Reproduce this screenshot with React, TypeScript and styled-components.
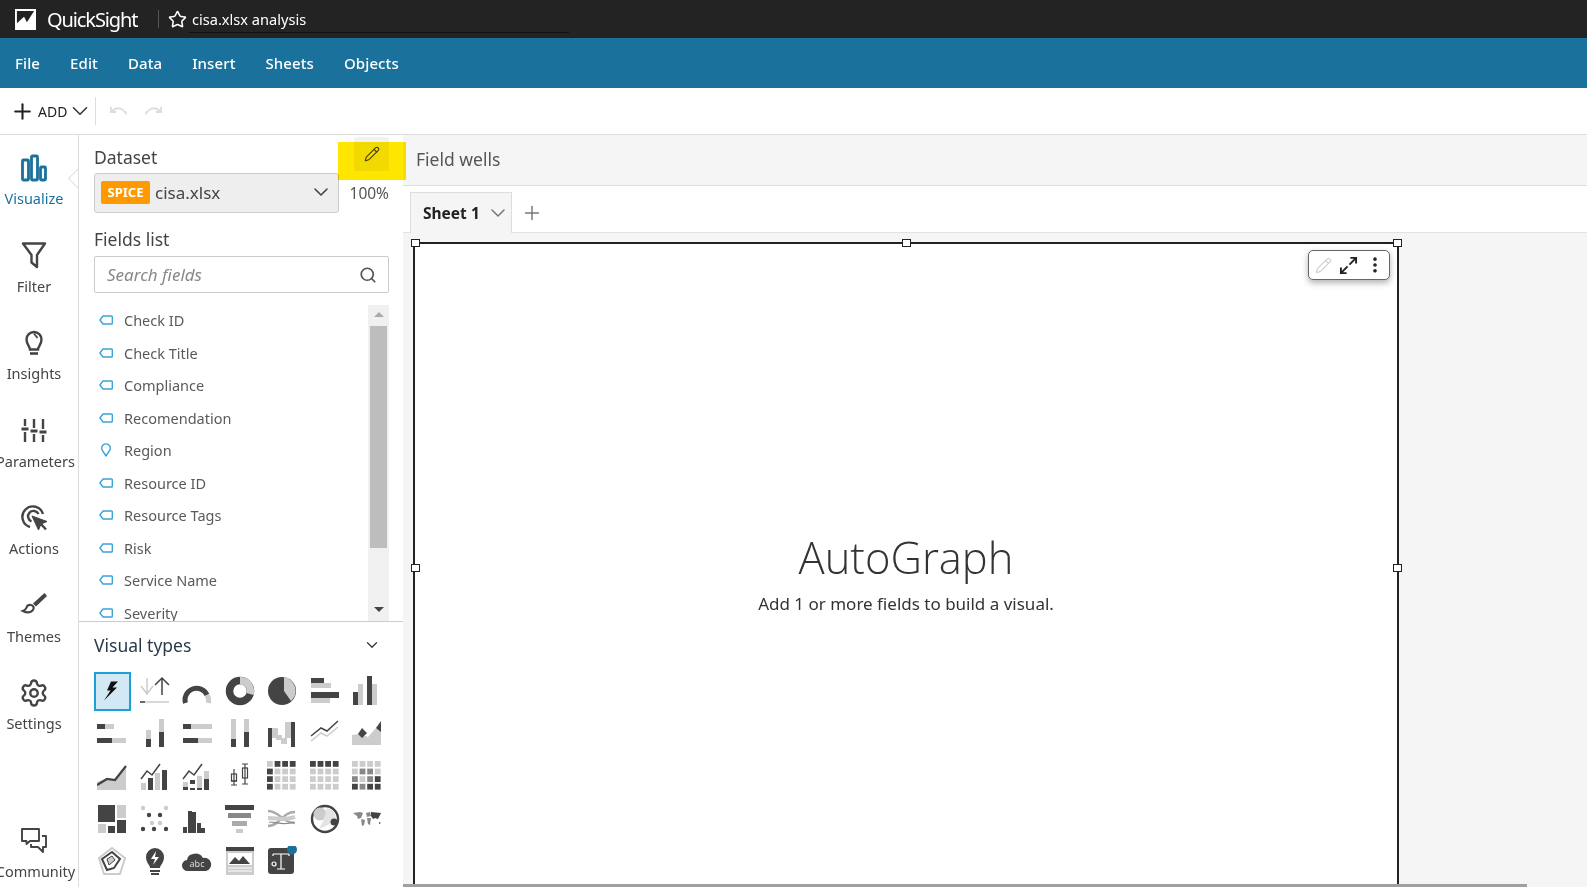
import React from 'react';
import styled, { createGlobalStyle } from 'styled-components';
import { Settings, Pencil, Search, ChevronDown, Plus, Star, MoreVertical } from 'lucide-react';

const DK = '#444';
const LT = '#ccc';

const railItems = [
    { label: 'Visualize', icon: 'visualize', active: true },
    { label: 'Filter', icon: 'filter' },
    { label: 'Insights', icon: 'insights' },
    { label: 'Parameters', icon: 'parameters', wide: true },
    { label: 'Actions', icon: 'actions' },
    { label: 'Themes', icon: 'themes' },
    { label: 'Settings', icon: 'settings' },
];

const fields = [
    'Check ID', 'Check Title', 'Compliance', 'Recomendation', 'Region',
    'Resource ID', 'Resource Tags', 'Risk', 'Service Name', 'Severity',
];

const RailIcon = ({ name, color }: { name: string; color: string }) => {
    const common = { width: 30, height: 30, viewBox: '0 0 30 30', fill: 'none', stroke: color, strokeWidth: 2.4 };
    switch (name) {
        case 'visualize':
            return (
                <svg {...common} strokeWidth={2.8}>
                    <rect x="3.500" y="7" width="6" height="20" rx="1" />
                    <rect x="12.500" y="3" width="6" height="24" rx="1" />
                    <rect x="21.500" y="14" width="5" height="13" rx="1" />
                </svg>
            );
        case 'filter':
            return (
                <svg {...common}>
                    <path d="M4 2.500h22L18 14v12l-5.500-4.500V14z" strokeLinejoin="round" />
                </svg>
            );
        case 'insights':
            return (
                <svg {...common}>
                    <path d="M11 21.500c0-3-3.500-5-3.500-10a7.500 7.500 0 0 1 15 0c0 5-3.500 7-3.500 10z" />
                    <path d="M15 5.500l3.500 4.500" strokeWidth="1.800" />
                    <path d="M11 25.500h8" strokeWidth="2.600" />
                </svg>
            );
        case 'parameters':
            return (
                <svg {...common}>
                    <path d="M6 3v7M6 16v10M15 3v9M15 18v8M24 3v10M24 19v7" />
                    <path d="M2.500 13h7M11.500 15h7M20.500 16h7" strokeWidth="2.800" />
                </svg>
            );
        case 'actions':
            return (
                <svg {...common}>
                    <path d="M11 24a10.500 10.500 0 1 1 13-13" />
                    <path d="M12.500 18.500A5.500 5.500 0 1 1 19.500 11" />
                    <path d="M13 13l15 5.500-6 2.500-2.500 6z" fill={color} strokeWidth="1" />
                    <path d="M22 21l5 5.500" />
                </svg>
            );
        case 'themes':
            return (
                <svg {...common}>
                    <path d="M25.500 2L14 12.500l3 3L28 5z" fill={color} stroke="none" />
                    <path d="M12 14c3 .5 3.500 3.500 1.500 5.500-2.500 2.500-6.500 2-9.500.5 2.500-.8 3-2 3.500-3.500.5-2 2.500-3 4.500-2.500z" strokeWidth="2.200" />
                </svg>
            );
        case 'settings':
            return <Settings size={30} color={color} strokeWidth={1.9} />;
        default:
            return (
                <svg {...common}>
                    <path d="M3 4h17v12H11l-3.500 3v-3H3z" strokeWidth="1.900" strokeLinejoin="round" />
                    <path d="M23 11h4v11h-3v5l-5-5h-7v-3" strokeWidth="1.900" strokeLinejoin="round" />
                </svg>
            );
    }
};

const TagIcon = () => (
    <svg width="14" height="10" viewBox="0 0 14 10" fill="none" stroke="#3aa3d8" strokeWidth="1.400">
        <path d="M4 1h8.500a.8.8 0 0 1 .8.800v6.400a.8.8 0 0 1-.8.800H4L.9 5z" strokeLinejoin="round" />
    </svg>
);

const PinIcon = () => (
    <svg width="14" height="14" viewBox="0 0 14 14" fill="none" stroke="#3aa3d8" strokeWidth="1.400">
        <path d="M7 13L3.200 7.200a4.300 4.300 0 1 1 7.600 0z" strokeLinejoin="round" />
    </svg>
);

const HistoryIcon = ({ flip }: { flip?: boolean }) => (
    <HistorySvg viewBox="0 0 20 12" $flip={flip}>
        <path d="M2 1.500v5.500h5.500" fill="none" stroke="#ddd" strokeWidth="2" />
        <path d="M2.500 7C7 1.500 14 1.500 18.500 9.500" fill="none" stroke="#ddd" strokeWidth="2" />
    </HistorySvg>
);

type Bar = [number, number, number, number, string?];

const Bars = ({ items }: { items: Bar[] }) => (
    <>
        {items.map(([x, y, w, h, c], i) => (
            <rect key={i} x={x} y={y} width={w} height={h} fill={c || DK} />
        ))}
    </>
);

const gridCells = (colors: string[]): Bar[] =>
    colors.map((c, i) => [(i % 4) * 7.600, Math.floor(i / 4) * 7.600, 5.800, 5.800, c] as Bar);

const M = '#888';

const visualIcons: React.ReactNode[] = [
    <path key="bolt" d="M21 5.500h-7L10 14.500h3.500L7 24.500l13-13h-4.500z" fill="#111" />,
    <g key="kpi" fill="none" strokeWidth="1.500">
        <path d="M7 2v17M1 10l6 8 6-8" stroke={LT} />
        <path d="M22 19V2M15 9l7-7 7 7" stroke={DK} />
        <path d="M0 26h29" stroke={LT} />
        <path d="M0 26h5" stroke={DK} />
    </g>,
    <g key="gauge" fill="none" strokeWidth="5">
        <path d="M3.500 27A11.500 11.500 0 0 1 25 19" stroke={DK} />
        <path d="M25 19A11.500 11.500 0 0 1 26.500 27" stroke={LT} />
    </g>,
    <g key="donut" fill="none" strokeWidth="7.500">
        <circle cx="15" cy="15" r="10.500" stroke={DK} />
        <path d="M15 4.500A10.500 10.500 0 0 1 25 18" stroke={LT} />
    </g>,
    <g key="pie">
        <circle cx="15" cy="15" r="14" fill={DK} />
        <path d="M17 1a14 14 0 0 1 7 24L17 15z" fill={LT} />
    </g>,
    <Bars key="hbar" items={[[1, 2, 13, 5], [1, 7, 20, 5, LT], [1, 16, 28, 6], [1, 22, 19, 5, LT]]} />,
    <Bars key="vbar" items={[[1, 16, 5, 13], [6, 8, 5, 21, LT], [15, 0, 5, 29], [20, 8, 5, 21, LT]]} />,

    <Bars key="shbar" items={[[0, 5, 8, 5], [8, 5, 9, 5, LT], [0, 19, 15, 5], [15, 19, 14, 5, LT]]} />,
    <Bars key="svbar" items={[[6, 11, 5, 9, LT], [6, 20, 5, 8], [19, 0, 5, 13, LT], [19, 13, 5, 15]]} />,
    <Bars key="phbar" items={[[1, 5, 8, 5], [9, 5, 21, 5, LT], [1, 19, 15, 5], [16, 19, 14, 5, LT]]} />,
    <Bars key="pvbar" items={[[6, 0, 5, 20, LT], [6, 20, 5, 8], [19, 0, 5, 13, LT], [19, 13, 5, 15]]} />,
    <Bars key="waterfall" items={[[1, 9, 4, 19], [5, 9, 6, 10, LT], [9, 16, 6, 5, LT], [14, 19, 6, 6, LT], [18, 3, 6, 16, LT], [24, 3, 4, 25]]} />,
    <g key="line" fill="none" strokeWidth="1.500">
        <path d="M1 22l10-8 6 3L28 8" stroke={LT} />
        <path d="M1 17l10-8 6 3L28 2" stroke={DK} />
    </g>,
    <g key="area">
        <path d="M0 16l8-1 8 3 8-9 5-2v19H0z" fill={LT} />
        <path d="M6 15l4-6 5 5-5 5zM24 9l5-7v11z" fill={DK} />
    </g>,

    <g key="aline">
        <path d="M0 29V21l10-4 8 1L29 6v23z" fill={LT} />
        <path d="M0 24l10-6 8 1L29 5" fill="none" stroke={DK} strokeWidth="2.200" />
    </g>,
    <g key="combo">
        <Bars items={[[1, 22, 5, 7, LT], [8, 17, 5, 12], [15, 12, 5, 17, LT], [22, 9, 5, 20]]} />
        <path d="M1 18l6-8 5 4 8-11" fill="none" stroke={DK} strokeWidth="1.500" />
    </g>,
    <g key="scombo">
        <Bars items={[[1, 26, 5, 3], [1, 21, 5, 5, LT], [8, 27, 5, 2], [8, 19, 5, 4], [15, 27, 5, 2], [15, 15, 5, 12, LT], [22, 18, 5, 11], [22, 10, 5, 8, LT]]} />
        <path d="M1 18l6-8 5 4 8-11" fill="none" stroke={DK} strokeWidth="1.500" />
    </g>,
    <g key="box" fill="none" stroke={DK} strokeWidth="1.200">
        <path d="M9 8v16M6 20h6M6 24h6" />
        <rect x="6.500" y="13" width="5" height="7" />
        <path d="M20 3v20M17 3h6M17 23h6" />
        <rect x="17.500" y="7" width="5" height="10" />
    </g>,
    <Bars key="pivot" items={gridCells([LT, DK, DK, DK, DK, LT, LT, LT, DK, LT, LT, LT, DK, LT, LT, LT])} />,
    <Bars key="table" items={gridCells([DK, DK, DK, DK, LT, LT, LT, LT, LT, LT, LT, LT, LT, LT, LT, LT])} />,
    <Bars key="heat" items={gridCells([LT, LT, LT, LT, LT, M, M, LT, M, LT, M, DK, DK, M, DK, DK])} />,

    <Bars key="tree" items={[[1, 1, 17, 17], [20, 1, 9, 13, LT], [1, 20, 8, 9, LT], [11, 22, 7, 7], [20, 16, 9, 13]]} />,
    <g key="scatter">
        {[[3, 4, LT], [26, 4, LT], [9, 11, DK], [20, 11, DK], [12, 19, LT], [20, 19, LT], [3, 25, DK], [14, 25, DK], [26, 25, DK]].map(([x, y, c], i) => (
            <circle key={i} cx={x as number} cy={y as number} r="2.200" fill={c as string} />
        ))}
    </g>,
    <Bars key="hist" items={[[1, 23, 4, 6], [6, 7, 4, 22], [10, 8, 4, 21], [15, 19, 4, 10], [19, 24, 4, 5]]} />,
    <Bars key="funnel" items={[[0, 1, 29, 5], [3, 9, 23, 5, M], [7, 17, 15, 5, '#aaa'], [11, 25, 7, 4, LT]]} />,
    <g key="sankey" fill="none" strokeWidth="2.400">
        <path d="M1 7c12 0 14 12 27 12" stroke="#aaa" />
        <path d="M1 22C13 22 15 8 28 8" stroke="#aaa" />
        <path d="M1 14c10 0 14 3 27 -1" stroke={LT} strokeWidth="4" />
        <path d="M2 18c9 0 14 4 25 0" stroke={M} strokeWidth="1.200" />
    </g>,
    <g key="globe">
        <circle cx="15" cy="15" r="13" fill="#fff" stroke={DK} strokeWidth="2.400" />
        <circle cx="10" cy="10" r="6.500" fill={LT} />
        <path d="M17 4a11 11 0 0 1 9 11l-8 6-9 4 4-8z" fill="#e4e4e4" />
        <circle cx="24" cy="18" r="3.500" fill={DK} />
    </g>,
    <g key="map">
        <path d="M1 9l7-1 3 1-2 5-3 1-1-3zM9 15l4 1-1 5-2 1zM14 9l4-1 1 4-4 1zM15 14l4 0-1 7-2-1z" fill={M} />
        <path d="M19 8l10 1-3 6-3-1-2 1-2-3zM27 18l2 1-2 1z" fill={DK} />
    </g>,

    <g key="radar" fill="none">
        <path d="M15 2l13 10-5 16H7L2 12z" stroke={LT} strokeWidth="2" />
        <path d="M15 6l8 7-6 9-7 2-5-11z" stroke={DK} strokeWidth="2" />
        <path d="M15 10l3 4-6 5-2-6z" fill={LT} stroke={DK} strokeWidth="1" />
    </g>,
    <g key="sbulb">
        <path d="M10 22c0-3-4-5-4-11a9 9 0 0 1 18 0c0 6-4 8-4 11z" fill={DK} />
        <path d="M16 5l-5 8h4l-2 6 6-8h-4z" fill="#fff" />
        <path d="M10 24h10v2H10zM11 27h8v2h-8z" fill={DK} />
    </g>,
    <g key="cloud">
        <path d="M6 25a5.500 5.500 0 0 1-1-11 7 7 0 0 1 6-6 8 8 0 0 1 10 4 6.500 6.500 0 0 1 3 13z" fill={DK} />
        <text x="15" y="21" textAnchor="middle" fontSize="9" fill="#ddd" fontFamily="'Noto Sans', sans-serif">abc</text>
    </g>,
    <g key="dash">
        <rect x="1" y="1" width="28" height="28" fill={LT} />
        <rect x="1" y="1" width="28" height="4" fill={DK} />
        <rect x="3" y="7" width="24" height="12" fill="#fff" />
        <path d="M4 18l6-7 4 4 4-5 7 8z" fill={DK} />
        <path d="M3 22h24M3 25h24" stroke="#fff" strokeWidth="1.200" />
    </g>,
    <g key="textbox">
        <rect x="1" y="2" width="26" height="26" rx="3" fill={DK} />
        <path d="M6 8h16M14 8v15M10 23h8M6 8v2M22 8v2" stroke="#fff" strokeWidth="1.200" fill="none" />
        <circle cx="7" cy="18" r="2" fill="none" stroke="#fff" strokeWidth="1.200" />
        <circle cx="25" cy="3.500" r="5" fill="#1a719c" />
    </g>,
];

const App = () => {
    return (
        <Root>
            <GlobalStyle />
            <TitleBar>
                <Logo viewBox="0 0 22 22">
                    <rect width="22" height="22" fill="#fff" />
                    <path d="M2 2H20L12.500 14 9.500 8 2 15z" fill="#232323" />
                </Logo>
                <Brand>QuickSight</Brand>
                <TitleDivider />
                <Star size={19} color="#fff" strokeWidth={2} />
                <AnalysisName>cisa.xlsx analysis</AnalysisName>
            </TitleBar>
            <MenuBar>
                {['File', 'Edit', 'Data', 'Insert', 'Sheets', 'Objects'].map(m => (
                    <MenuItem key={m}>{m}</MenuItem>
                ))}
            </MenuBar>
            <ToolBar>
                <Plus size={25} color="#222" strokeWidth={2} />
                <AddLabel>ADD</AddLabel>
                <ChevronDown size={26} color="#333" strokeWidth={1.4} />
                <ToolDivider />
                <HistoryIcon />
                <HistoryIcon flip />
            </ToolBar>
            <Body>
                <Rail>
                    {railItems.map(item => (
                        <RailItem key={item.label}>
                            <RailIcon name={item.icon} color={item.active ? '#1a719c' : '#444'} />
                            <RailLabel $active={item.active} $wide={item.wide}>{item.label}</RailLabel>
                        </RailItem>
                    ))}
                    <RailFoot>
                        <RailIcon name="community" color="#444" />
                        <RailLabel $wide $foot>Community</RailLabel>
                    </RailFoot>
                    <RailNotch />
                </Rail>
                <Panel>
                    <DatasetHead>
                        <SectionLabel>Dataset</SectionLabel>
                        <EditButton>
                            <Pencil size={16} color="#444" strokeWidth={1.6} />
                        </EditButton>
                    </DatasetHead>
                    <DatasetRow>
                        <DatasetSelect>
                            <SpiceBadge>SPICE</SpiceBadge>
                            <DatasetName>cisa.xlsx</DatasetName>
                            <ChevronDown size={24} color="#444" strokeWidth={1.6} />
                        </DatasetSelect>
                        <Percent>100%</Percent>
                    </DatasetRow>
                    <FieldsHead>Fields list</FieldsHead>
                    <SearchBox>
                        <Placeholder>Search fields</Placeholder>
                        <Search size={18} color="#555" strokeWidth={2.300} />
                    </SearchBox>
                    <FieldArea>
                        <FieldList>
                            {fields.map(f => (
                                <FieldRow key={f}>
                                    <FieldGlyph>{f === 'Region' ? <PinIcon /> : <TagIcon />}</FieldGlyph>
                                    {f}
                                </FieldRow>
                            ))}
                        </FieldList>
                        <ScrollTrack>
                            <ScrollArrow $up />
                            <ScrollThumb />
                            <ScrollArrow />
                        </ScrollTrack>
                    </FieldArea>
                    <VisualHead>
                        <SectionLabel $dark>Visual types</SectionLabel>
                        <ChevronDown size={18} color="#333" strokeWidth={1.600} />
                    </VisualHead>
                    <VisualGrid>
                        {visualIcons.map((icon, i) => (
                            <VisualCell key={i} $selected={i === 0}>
                                <svg width="30" height="30" viewBox="0 0 30 30">{icon}</svg>
                            </VisualCell>
                        ))}
                    </VisualGrid>
                </Panel>
                <Workspace>
                    <FieldWells>Field wells</FieldWells>
                    <TabBar>
                        <SheetTab>
                            Sheet 1
                            <ChevronDown size={24} color="#777" strokeWidth={1.500} />
                        </SheetTab>
                        <Plus size={22} color="#777" strokeWidth={1.600} />
                    </TabBar>
                    <Canvas>
                        <VisualBox>
                            <Handle $x="0%" $y="0%" />
                            <Handle $x="50%" $y="0%" />
                            <Handle $x="100%" $y="0%" />
                            <Handle $x="0%" $y="50%" />
                            <Handle $x="100%" $y="50%" />
                            <VisualMenu>
                                <Pencil size={17} color="#ccc" strokeWidth={1.500} />
                                <ExpandIcon viewBox="0 0 20 20">
                                    <path d="M12 2h6v6M18 2l-7 7M8 18H2v-6M2 18l7-7" fill="none" stroke="#222" strokeWidth="2" />
                                </ExpandIcon>
                                <MoreVertical size={20} color="#222" strokeWidth={2.400} />
                            </VisualMenu>
                            <EmptyTitle>AutoGraph</EmptyTitle>
                            <EmptyText>Add 1 or more fields to build a visual.</EmptyText>
                        </VisualBox>
                    </Canvas>
                </Workspace>
                <Highlight />
                <PageScroll />
            </Body>
        </Root>
    );
};

export default App;

const GlobalStyle = createGlobalStyle`
    html, body {
        margin: 0;
        padding: 0;
        background: #fff;
    }
    * {
        box-sizing: border-box;
    }
`;

const Root = styled.div`
    width: 1587px;
    height: 887px;
    display: flex;
    flex-direction: column;
    overflow: hidden;
    font-family: "Noto Sans", "Liberation Sans", sans-serif;
    color: #444;
`;

const TitleBar = styled.div`
    height: 38px;
    flex: none;
    background-color: #232323;
    display: flex;
    align-items: center;
    padding-left: 15px;
    color: #fff;
`;

const Logo = styled.svg`
    width: 21px;
    height: 21px;
    margin-right: 11px;
`;

const Brand = styled.div`
    font-size: 20px;
    letter-spacing: -1.1px;
    width: 92px;
    white-space: nowrap;
`;

const TitleDivider = styled.div`
    width: 1px;
    height: 18px;
    background-color: #555;
    margin: 0 9px 0 19px;
`;

const AnalysisName = styled.div`
    width: 380px;
    height: 25px;
    line-height: 23px;
    margin-left: 2px;
    padding-left: 3px;
    margin-top: 2px;
    font-size: 14.6px;
    border-bottom: 1px solid #111;
`;

const MenuBar = styled.div`
    height: 50px;
    flex: none;
    background-color: #1a719c;
    display: flex;
    align-items: center;
    padding-left: 15px;
    gap: 30px;
`;

const MenuItem = styled.div`
    color: #fff;
    font-size: 15px;
    font-weight: 500;
    letter-spacing: 0.1px;
`;

const ToolBar = styled.div`
    height: 47px;
    flex: none;
    display: flex;
    align-items: center;
    padding-left: 10px;
    border-bottom: 1px solid #ddd;
`;

const AddLabel = styled.div`
    font-size: 14px;
    color: #222;
    margin-left: 3px;
`;

const ToolDivider = styled.div`
    width: 1px;
    height: 28px;
    background-color: #ddd;
    margin: 0 13px 0 2px;
`;

const HistorySvg = styled.svg<{ $flip?: boolean }>`
    width: 19px;
    height: 12px;
    margin-right: 16px;
    transform: ${p => (p.$flip ? 'scaleX(-1)' : 'none')};
`;

const Body = styled.div`
    flex: 1;
    display: flex;
    position: relative;
    min-height: 0;
`;

const Rail = styled.div`
    width: 79px;
    flex: none;
    border-right: 1px solid #ddd;
    padding-top: 18px;
    padding-bottom: 5px;
    display: flex;
    flex-direction: column;
    position: relative;
    overflow: hidden;
`;

const RailItem = styled.div`
    height: 87.5px;
    width: 68px;
    flex: none;
    display: flex;
    flex-direction: column;
    align-items: center;
`;

const RailFoot = styled(RailItem)`
    height: 57px;
    margin-top: auto;
`;

const RailLabel = styled.div<{ $active?: boolean; $wide?: boolean; $foot?: boolean }>`
    margin-top: ${p => (p.$foot ? '6px' : '5px')};
    height: 20px;
    line-height: 20px;
    font-size: 14.5px;
    white-space: nowrap;
    color: ${p => (p.$active ? '#1a719c' : '#444')};
    margin-left: ${p => (p.$wide ? '3px' : '0')};
`;

const RailNotch = styled.div`
    position: absolute;
    right: -8px;
    top: 36px;
    width: 15px;
    height: 15px;
    background: #fff;
    border: 1px solid #ddd;
    transform: rotate(45deg);
`;

const Panel = styled.div`
    width: 324px;
    flex: none;
    padding-top: 2px;
    display: flex;
    flex-direction: column;
`;

const DatasetHead = styled.div`
    height: 34px;
    margin: 0 14px 2px 15px;
    display: flex;
    justify-content: space-between;
`;

const SectionLabel = styled.div<{ $dark?: boolean }>`
    font-size: 17.5px;
    line-height: 24px;
    padding-top: ${p => (p.$dark ? '0' : '8px')};
    color: ${p => (p.$dark ? '#2b3a4a' : '#444')};
`;

const EditButton = styled.div`
    width: 35px;
    height: 34px;
    background-color: #f2f2f2;
    border-radius: 2px;
    display: flex;
    align-items: center;
    justify-content: center;
`;

const DatasetRow = styled.div`
    margin: 0 14px 0 15px;
    display: flex;
    align-items: center;
    justify-content: space-between;
`;

const DatasetSelect = styled.div`
    width: 245px;
    height: 40px;
    background-color: #eee;
    border: 1px solid #ccc;
    border-radius: 3px;
    display: flex;
    align-items: center;
    padding: 0 5px 2px 6px;
`;

const SpiceBadge = styled.div`
    width: 49px;
    height: 23px;
    line-height: 22px;
    border-radius: 2px;
    background-color: #ff9900;
    color: #fff;
    font-size: 13px;
    font-weight: 700;
    text-align: center;
`;

const DatasetName = styled.div`
    flex: 1;
    margin-left: 5px;
    font-size: 17px;
    color: #444;
`;

const Percent = styled.div`
    font-size: 15.5px;
    color: #555;
`;

const FieldsHead = styled.div`
    height: 43px;
    line-height: 24px;
    padding: 14px 0 0 15px;
    font-size: 17.5px;
`;

const SearchBox = styled.div`
    height: 37px;
    flex: none;
    margin: 0 14px 12px 15px;
    border: 1px solid #ccc;
    border-radius: 2px;
    display: flex;
    align-items: center;
    justify-content: space-between;
    padding: 0 11px 0 12px;
`;

const Placeholder = styled.div`
    font-size: 17px;
    font-style: italic;
    color: #888;
`;

const FieldArea = styled.div`
    height: 317px;
    flex: none;
    display: flex;
    justify-content: space-between;
    padding-right: 14px;
    border-bottom: 1px solid #ccc;
`;

const FieldList = styled.div`
    flex: 1;
    overflow: hidden;
    padding-left: 20px;
`;

const FieldRow = styled.div`
    height: 32.5px;
    display: flex;
    align-items: center;
    padding-bottom: 2px;
    font-size: 14.5px;
    color: #5a5a5a;
`;

const FieldGlyph = styled.span`
    width: 25px;
    display: flex;
    align-items: center;
`;

const ScrollTrack = styled.div`
    width: 21px;
    background-color: #f0f0f0;
    display: flex;
    flex-direction: column;
    align-items: center;
    padding-top: 7px;
`;

const ScrollThumb = styled.div`
    width: 17px;
    height: 222px;
    background-color: #bdbdbd;
    margin-top: 9px;
`;

const ScrollArrow = styled.div<{ $up?: boolean }>`
    width: 0;
    height: 0;
    border-left: 5px solid transparent;
    border-right: 5px solid transparent;
    border-bottom: ${p => (p.$up ? '5px solid #aaa' : '0')};
    border-top: ${p => (p.$up ? '0' : '5px solid #444')};
    margin-top: ${p => (p.$up ? '0' : 'auto')};
    margin-bottom: ${p => (p.$up ? '0' : '9px')};
`;

const VisualHead = styled.div`
    height: 48px;
    flex: none;
    display: flex;
    align-items: center;
    justify-content: space-between;
    padding: 0 22px 2px 15px;
`;

const VisualGrid = styled.div`
    display: grid;
    grid-template-columns: repeat(7, 42.5px);
    grid-auto-rows: 42.5px;
    padding-left: 12px;
`;

const VisualCell = styled.div<{ $selected?: boolean }>`
    display: flex;
    align-items: center;
    justify-content: center;

    ${p => p.$selected && `
        margin: 2px 3px;
        background-color: #d2e9f5;
        border: 2.5px solid #1ea0d5;
    `}
`;

const Workspace = styled.div`
    flex: 1;
    min-width: 0;
    display: flex;
    flex-direction: column;
`;

const FieldWells = styled.div`
    height: 51px;
    flex: none;
    line-height: 48px;
    padding-left: 13px;
    font-size: 17.5px;
    color: #555;
    background-color: #f5f5f5;
    border-bottom: 1px solid #ddd;
`;

const TabBar = styled.div`
    height: 47px;
    flex: none;
    display: flex;
    align-items: flex-end;
    padding-left: 7px;
    border-bottom: 1px solid #e2e2e2;

    > svg {
        margin: 0 0 8px 9px;
    }
`;

const SheetTab = styled.div`
    width: 102px;
    height: 41px;
    margin-bottom: -1px;
    background-color: #f5f5f5;
    border: 1px solid #ddd;
    border-bottom: none;
    display: flex;
    align-items: center;
    justify-content: space-between;
    padding: 0 1px 0 12px;
    font-size: 15.5px;
    font-weight: 700;
    color: #222;
`;

const Canvas = styled.div`
    flex: 1;
    min-height: 0;
    background-color: #f5f5f5;
    padding: 9px 0 0 10px;
`;

const VisualBox = styled.div`
    width: 986px;
    height: 654px;
    position: relative;
    background-color: #fff;
    border: 2px solid #222;
    display: flex;
    flex-direction: column;
    align-items: center;
    padding-top: 284px;
`;

const Handle = styled.div<{ $x: string; $y: string }>`
    position: absolute;
    left: ${p => p.$x};
    top: ${p => p.$y};
    width: 9px;
    height: 8px;
    margin: -5px 0 0 -4.500px;
    background-color: #fff;
    border: 1.5px solid #222;
`;

const VisualMenu = styled.div`
    position: absolute;
    top: 6px;
    right: 7px;
    width: 82px;
    height: 30px;
    background-color: #fff;
    border: 1px solid #666;
    border-radius: 5px;
    box-shadow: 0 3px 6px rgba(0, 0, 0, 0.3);
    display: flex;
    align-items: center;
    justify-content: space-between;
    padding: 0 4px 0 6px;
`;

const ExpandIcon = styled.svg`
    width: 19px;
    height: 19px;
`;

const EmptyTitle = styled.div`
    font-size: 43.5px;
    font-weight: 300;
    line-height: 60px;
    color: #333;
    font-family: "Open Sans", "Noto Sans", sans-serif;
`;

const EmptyText = styled.div`
    font-size: 17px;
    line-height: 24px;
    margin-top: 4px;
    color: #333;
`;

const Highlight = styled.div`
    position: absolute;
    left: 338px;
    top: 7px;
    width: 68px;
    height: 38px;
    background-color: #ffe600;
    mix-blend-mode: multiply;
`;

const PageScroll = styled.div`
    position: absolute;
    left: 403px;
    bottom: 0;
    width: 1124px;
    height: 3px;
    background-color: #a0a0a0;
`;
